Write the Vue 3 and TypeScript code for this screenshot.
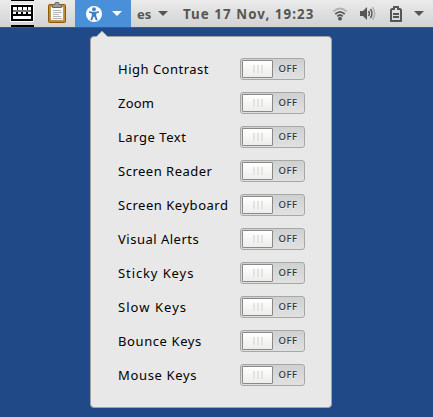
<script setup lang="ts">
import { ref } from 'vue'

interface Option {
  label: string
  spacing: number
  on: boolean
}

const options = ref<Option[]>([
  { label: 'High Contrast', spacing: 0.5, on: false },
  { label: 'Zoom', spacing: 0.2, on: false },
  { label: 'Large Text', spacing: 0.55, on: false },
  { label: 'Screen Reader', spacing: 0.5, on: false },
  { label: 'Screen Keyboard', spacing: 0.53, on: false },
  { label: 'Visual Alerts', spacing: 0.5, on: false },
  { label: 'Sticky Keys', spacing: 0.9, on: false },
  { label: 'Slow Keys', spacing: 1.05, on: false },
  { label: 'Bounce Keys', spacing: 0.6, on: false },
  { label: 'Mouse Keys', spacing: 0.65, on: false },
])
</script>

<template>
  <div class="desktop">
    <header class="bar">
      <svg class="keyboard" width="24" height="27" viewBox="0 0 24 27" shape-rendering="crispEdges">
        <path d="M1 0h23v1H1zM1 25h23v2H1z" fill="#000" />
        <path d="M0 4h24v18H0z" fill="#fff" />
        <path d="M1 5h22v16H1z" fill="#000" />
        <path d="M3 10h18v2H3z" fill="#777" />
        <path d="M3 7h4v3H3zM8 7h4v3H8zM13 7h4v3h-4zM18 7h3v3h-3zM3 12h3v2H3zM8 12h3v2H8zM13 12h3v2h-3zM18 12h3v2h-3zM3 16h18v3H3z" fill="#fff" />
      </svg>
      <svg class="clipboard" width="20" height="23" viewBox="0 0 20 23">
        <rect x="1.500" y="3.500" width="17" height="18" rx="1" fill="#c18a35" stroke="#8f5902" />
        <rect x="3.500" y="5.500" width="13" height="14" fill="#fafafa" stroke="#a97c38" stroke-width=".6" />
        <path d="M6 9.500h8M6 11.500h9M6 13.500h6M6 15.500h8M6 17.500h9" stroke="#b5b5b5" />
        <path d="M5.500 6.500V4.500q0-1 1-1H8V2.300Q8 1.500 9 1.500h2q1 0 1 .8v1.200h1.500q1 0 1 1v2z" fill="#9b9d99" stroke="#666864" />
      </svg>
      <div class="access">
        <svg width="16" height="16" viewBox="0 0 16 16">
          <circle cx="8" cy="8" r="8" fill="#fff" />
          <circle cx="8" cy="3.200" r="1.900" fill="#3f7fc4" />
          <path d="M3 5.200l3.600.6h2.800l3.600-.6v1.600l-2.800.7v2.300l1.500 4.100-1.700.5L8.400 10.800h-.8L6 14.400l-1.700-.5 1.500-4.100V7.500L3 6.800z" fill="#3f7fc4" />
        </svg>
        <svg width="10" height="5" viewBox="0 0 10 5"><path d="M0 0h10L5 5z" fill="#fff" /></svg>
      </div>
      <div class="lang">
        <span>es</span>
        <svg width="10" height="5" viewBox="0 0 10 5"><path d="M0 0h10L5 5z" fill="#555753" /></svg>
      </div>
      <time class="clock">Tue 17 Nov, 19:23</time>
      <svg class="wifi" width="16" height="14" viewBox="0 0 16 14" fill="none" stroke-width="1.8">
        <path d="M1.200 4.600Q8-1.600 14.800 4.600" stroke="#b2b3b1" />
        <path d="M3.300 7.200Q8 2.600 12.700 7.200" stroke="#555753" />
        <path d="M5.300 9.300Q8 6.700 10.700 9.300" stroke="#555753" />
        <circle cx="8" cy="11.700" r="1.900" fill="#555753" />
      </svg>
      <svg class="volume" width="16" height="15" viewBox="0 0 16 15" fill="none">
        <path d="M0 5h3l4-4v13l-4-4H0z" fill="#555753" />
        <path d="M8.500 5q1.800 2.500 0 5M10.400 3q3.200 4.500 0 9" stroke="#555753" stroke-width="1.500" />
        <path d="M12.500 1.200q4.400 6.300 0 12.600" stroke="#b2b3b1" stroke-width="1.500" />
      </svg>
      <svg class="battery" width="12" height="16" viewBox="0 0 12 16">
        <path d="M4 2V1h4v2h2l1 1v11H1V4l1-1h2z" fill="none" stroke="#555753" stroke-width="2" />
        <path d="M3 7h6v2H3zM3 10h6v2H3z" fill="#555753" />
      </svg>
      <svg class="more" width="10" height="5" viewBox="0 0 10 5"><path d="M0 0h10L5 5z" fill="#555753" /></svg>
    </header>

    <section class="menu">
      <svg class="arrow" width="12" height="7" viewBox="0 0 12 7">
        <path d="M0 6L6 0l6 6v1H0z" fill="#e8e8e8" />
        <path d="M0 6L6 .500l6 5.500" fill="none" stroke="#b3b5b4" stroke-width=".8" />
      </svg>
      <div v-for="option in options" :key="option.label" class="row">
        <span :style="{ letterSpacing: option.spacing + 'px' }">{{ option.label }}</span>
        <button class="switch" :class="{ on: option.on }" @click="option.on = !option.on">
          <i class="knob"><b></b><b></b><b></b></i>
          <span class="state">{{ option.on ? 'ON' : 'OFF' }}</span>
        </button>
      </div>
    </section>
  </div>
</template>

<style>
body {
  background: #204a87;
  overflow: hidden;
}
</style>

<style scoped>
.desktop {
  box-sizing: border-box;
  width: 433px;
  height: 417px;
  background: #204a87;
  font-family: 'Noto Sans', 'Open Sans', sans-serif;
}
.bar {
  display: flex;
  align-items: center;
  box-sizing: border-box;
  height: 28px;
  padding-left: 10px;
  border-bottom: 1px solid #555753;
  background: linear-gradient(#ebebeb, #d2d2d2);
  color: #555753;
  font-size: 13px;
  font-weight: 700;
  white-space: nowrap;
}
.bar svg {
  flex: none;
}
.clipboard {
  margin-left: 13px;
  margin-top: -2px;
}
.access {
  display: flex;
  align-items: center;
  gap: 10px;
  box-sizing: border-box;
  width: 56px;
  height: 27px;
  margin-left: 8px;
  padding-left: 11px;
  background: #4a90d9;
}
.lang {
  display: flex;
  align-items: center;
  width: 46px;
  padding-left: 6px;
  gap: 6px;
}
.lang span {
  width: 15px;
}
.clock {
  width: 149px;
  font-size: 13.3px;
  letter-spacing: 1.08px;
}
.volume {
  margin-left: 12px;
}
.battery {
  margin-left: 14px;
}
.more {
  margin-left: 12px;
}
.menu {
  position: relative;
  display: flex;
  flex-direction: column;
  gap: 12px;
  box-sizing: border-box;
  width: 242px;
  height: 372px;
  margin: 8px 0 0 90px;
  padding: 21px 26px 0 27px;
  border: 1px solid #a0a3a3;
  border-radius: 4px;
  background: #e8e8e8;
}
.arrow {
  position: absolute;
  left: 5px;
  top: -6px;
}
.row {
  display: flex;
  align-items: center;
  justify-content: space-between;
  height: 22px;
  color: #000;
  font-size: 13px;
  line-height: 22px;
  white-space: nowrap;
}
.switch {
  display: flex;
  align-items: center;
  box-sizing: border-box;
  width: 65px;
  height: 22px;
  padding: 0 1px;
  border: 1px solid #a6a8a8;
  border-radius: 3px;
  background: linear-gradient(#cfd0d0, #e1e1e1);
  font-family: inherit;
}
.switch.on {
  flex-direction: row-reverse;
}
.knob {
  display: flex;
  align-items: center;
  justify-content: center;
  gap: 2px;
  box-sizing: border-box;
  width: 31px;
  height: 18px;
  border: 1px solid #888a89;
  border-radius: 1px;
  background: linear-gradient(#fff, #ededeb);
}
.knob b {
  width: 2px;
  height: 8px;
  background: #e3e3e1;
}
.state {
  flex: 1;
  color: #2e3436;
  font-size: 9.5px;
  font-weight: 500;
  line-height: 18px;
  text-align: center;
  letter-spacing: 0.5px;
  text-shadow: 0 1px #eee;
}
</style>
